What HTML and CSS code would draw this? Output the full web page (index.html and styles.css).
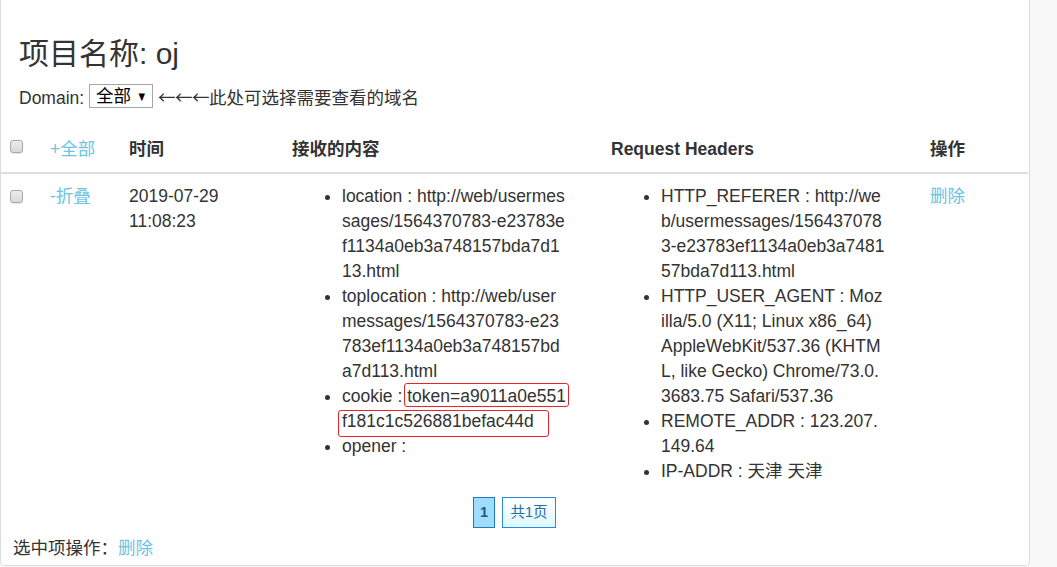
FILE: index.html
```html
<!DOCTYPE html>
<html lang="zh-CN">
<head>
<meta charset="utf-8">
<title>项目名称: oj</title>
<link rel="stylesheet" href="styles.css">
</head>
<body>
<div class="panel">
  <div class="project">
    <h3 class="project-title">项目名称: oj</h3>
    <div class="domain">Domain: <span class="select-box"><span class="select-text">全部</span><span class="select-arrow">▼</span></span> <span class="arrows">←←←</span>此处可选择需要查看的域名</div>
  </div>

  <table class="msg-table">
    <colgroup>
      <col class="c-check">
      <col class="c-toggle">
      <col class="c-time">
      <col class="c-content">
      <col class="c-headers">
      <col class="c-op">
    </colgroup>
    <thead>
      <tr>
        <th class="cell-check"><input type="checkbox" class="cb cb-head"></th>
        <th class="cell-toggle"><a class="link">+全部</a></th>
        <th>时间</th>
        <th>接收的内容</th>
        <th>Request Headers</th>
        <th>操作</th>
      </tr>
    </thead>
    <tbody>
      <tr>
        <td class="cell-check"><input type="checkbox" class="cb cb-row"></td>
        <td class="cell-toggle"><a class="link">-折叠</a></td>
        <td>2019-07-29 11:08:23</td>
        <td>
          <ul class="kv">
            <li>location : http://web/usermessages/1564370783-e23783ef1134a0eb3a748157bda7d113.html</li>
            <li>toplocation : http://web/usermessages/1564370783-e23783ef1134a0eb3a748157bda7d113.html</li>
            <li>cookie : <span class="mark mark-a">token=a9011a0e551</span><span class="mark mark-b">f181c1c526881befac44d</span></li>
            <li>opener : </li>
          </ul>
        </td>
        <td>
          <ul class="kv">
            <li>HTTP_REFERER : http://web/usermessages/1564370783-e23783ef1134a0eb3a748157bda7d113.html</li>
            <li class="ua">HTTP_USER_AGENT : Mozilla/5.0 (X11; Linux x86_64) AppleWebKit/537.36 (KHTML, like Gecko) Chrome/73.0.3683.75 Safari/537.36</li>
            <li>REMOTE_ADDR : 123.207.149.64</li>
            <li>IP-ADDR : 天津 天津</li>
          </ul>
        </td>
        <td><a class="link">删除</a></td>
      </tr>
    </tbody>
  </table>

  <div class="pager">
    <span class="page page-active">1</span>
    <span class="page page-total">共1页</span>
  </div>

  <div class="batch">选中项操作：<a class="link">删除</a></div>
</div>
</body>
</html>
```

FILE: styles.css
```css
html, body {
  margin: 0;
  padding: 0;
}

body {
  background: #f8f8f8;
  color: #333;
  font-family: "Liberation Sans", "Noto Sans CJK SC", sans-serif;
  font-size: 17.5px;
  line-height: 25px;
}

.panel {
  box-sizing: border-box;
  width: 1030px;
  height: 566px;
  background: #fff;
  border: 1px solid #dcdcdc;
  border-top: none;
  border-radius: 0 0 5px 5px;
  overflow: hidden;
}

.project {
  padding: 37px 18px 0;
}

.project-title {
  margin: 0;
  font-size: 30px;
  line-height: 33px;
  font-weight: normal;
  color: #333;
}

.domain {
  margin-top: 14px;
  line-height: 25px;
}

.select-box {
  display: inline-block;
  box-sizing: border-box;
  width: 64px;
  height: 24px;
  padding-left: 6px;
  border: 1px solid #a6a6a6;
  background: #fff;
  color: #000;
  line-height: 22px;
  vertical-align: 2px;
}

.select-text {
  display: inline-block;
  width: 42px;
}

.select-arrow {
  display: inline-block;
  font-family: "DejaVu Sans", sans-serif;
  font-size: 10px;
  line-height: 22px;
  vertical-align: 2px;
  transform: scaleX(0.85);
}

.arrows {
  font-family: "Noto Sans CJK SC", "DejaVu Sans", sans-serif;
  letter-spacing: -0.5px;
}

.msg-table {
  width: 1027px;
  margin-top: 15.5px;
  border-collapse: collapse;
  table-layout: fixed;
}

.c-check { width: 39px; }
.c-toggle { width: 79px; }
.c-time { width: 163px; }
.c-content { width: 319px; }
.c-headers { width: 319px; }
.c-op { width: 108px; }

.msg-table th,
.msg-table td {
  padding: 10px;
  text-align: left;
  vertical-align: top;
  line-height: 25px;
}

.msg-table th {
  font-weight: bold;
  border-bottom: 2px solid #dddddd;
}

.msg-table th.cell-toggle {
  font-weight: normal;
}

.msg-table .cell-check {
  padding-left: 9px;
  padding-right: 0;
}

.cb {
  -webkit-appearance: none;
  appearance: none;
  display: block;
  box-sizing: border-box;
  width: 13px;
  height: 13px;
  margin: 0;
  border: 1px solid #a9a9a9;
  border-radius: 3px;
  background: linear-gradient(#ececec, #d9d9d9);
  box-shadow: 0 1px 1px rgba(0, 0, 0, 0.1);
}

.cb-head { margin-top: 3.5px; }
.cb-row { margin-top: 6px; }

.link {
  color: #6cc4df;
  text-decoration: none;
  cursor: pointer;
}

.kv {
  width: 225.4px;
  margin: 0;
  padding-left: 50px;
  word-break: break-all;
}

.kv .ua {
  width: 223px;
}

.mark {
  position: relative;
}

.mark::after {
  content: "";
  position: absolute;
  border: 1px solid #e3262a;
  border-radius: 3px;
  pointer-events: none;
}

.mark-a::after {
  top: -3px;
  bottom: -1px;
  left: -3px;
  right: -3px;
}

.mark-b::after {
  top: -1px;
  bottom: -6px;
  left: -4px;
  right: -15px;
}

.pager {
  display: flex;
  justify-content: center;
  gap: 7px;
  width: 1027px;
  margin-top: 3px;
}

.page {
  box-sizing: border-box;
  height: 31px;
  line-height: 29px;
  font-size: 14.5px;
  text-align: center;
}

.page-active {
  width: 22px;
  border: 1px solid #1d79c2;
  background: #a0dcfc;
  color: #1d5b86;
  font-weight: bold;
}

.page-total {
  width: 54px;
  border: 1px solid #2b87e3;
  background: linear-gradient(#ffffff, #dcf8ff);
  color: #2a6aa0;
}

.batch {
  margin-top: 8.5px;
  padding-left: 12px;
  line-height: 25px;
}
```
